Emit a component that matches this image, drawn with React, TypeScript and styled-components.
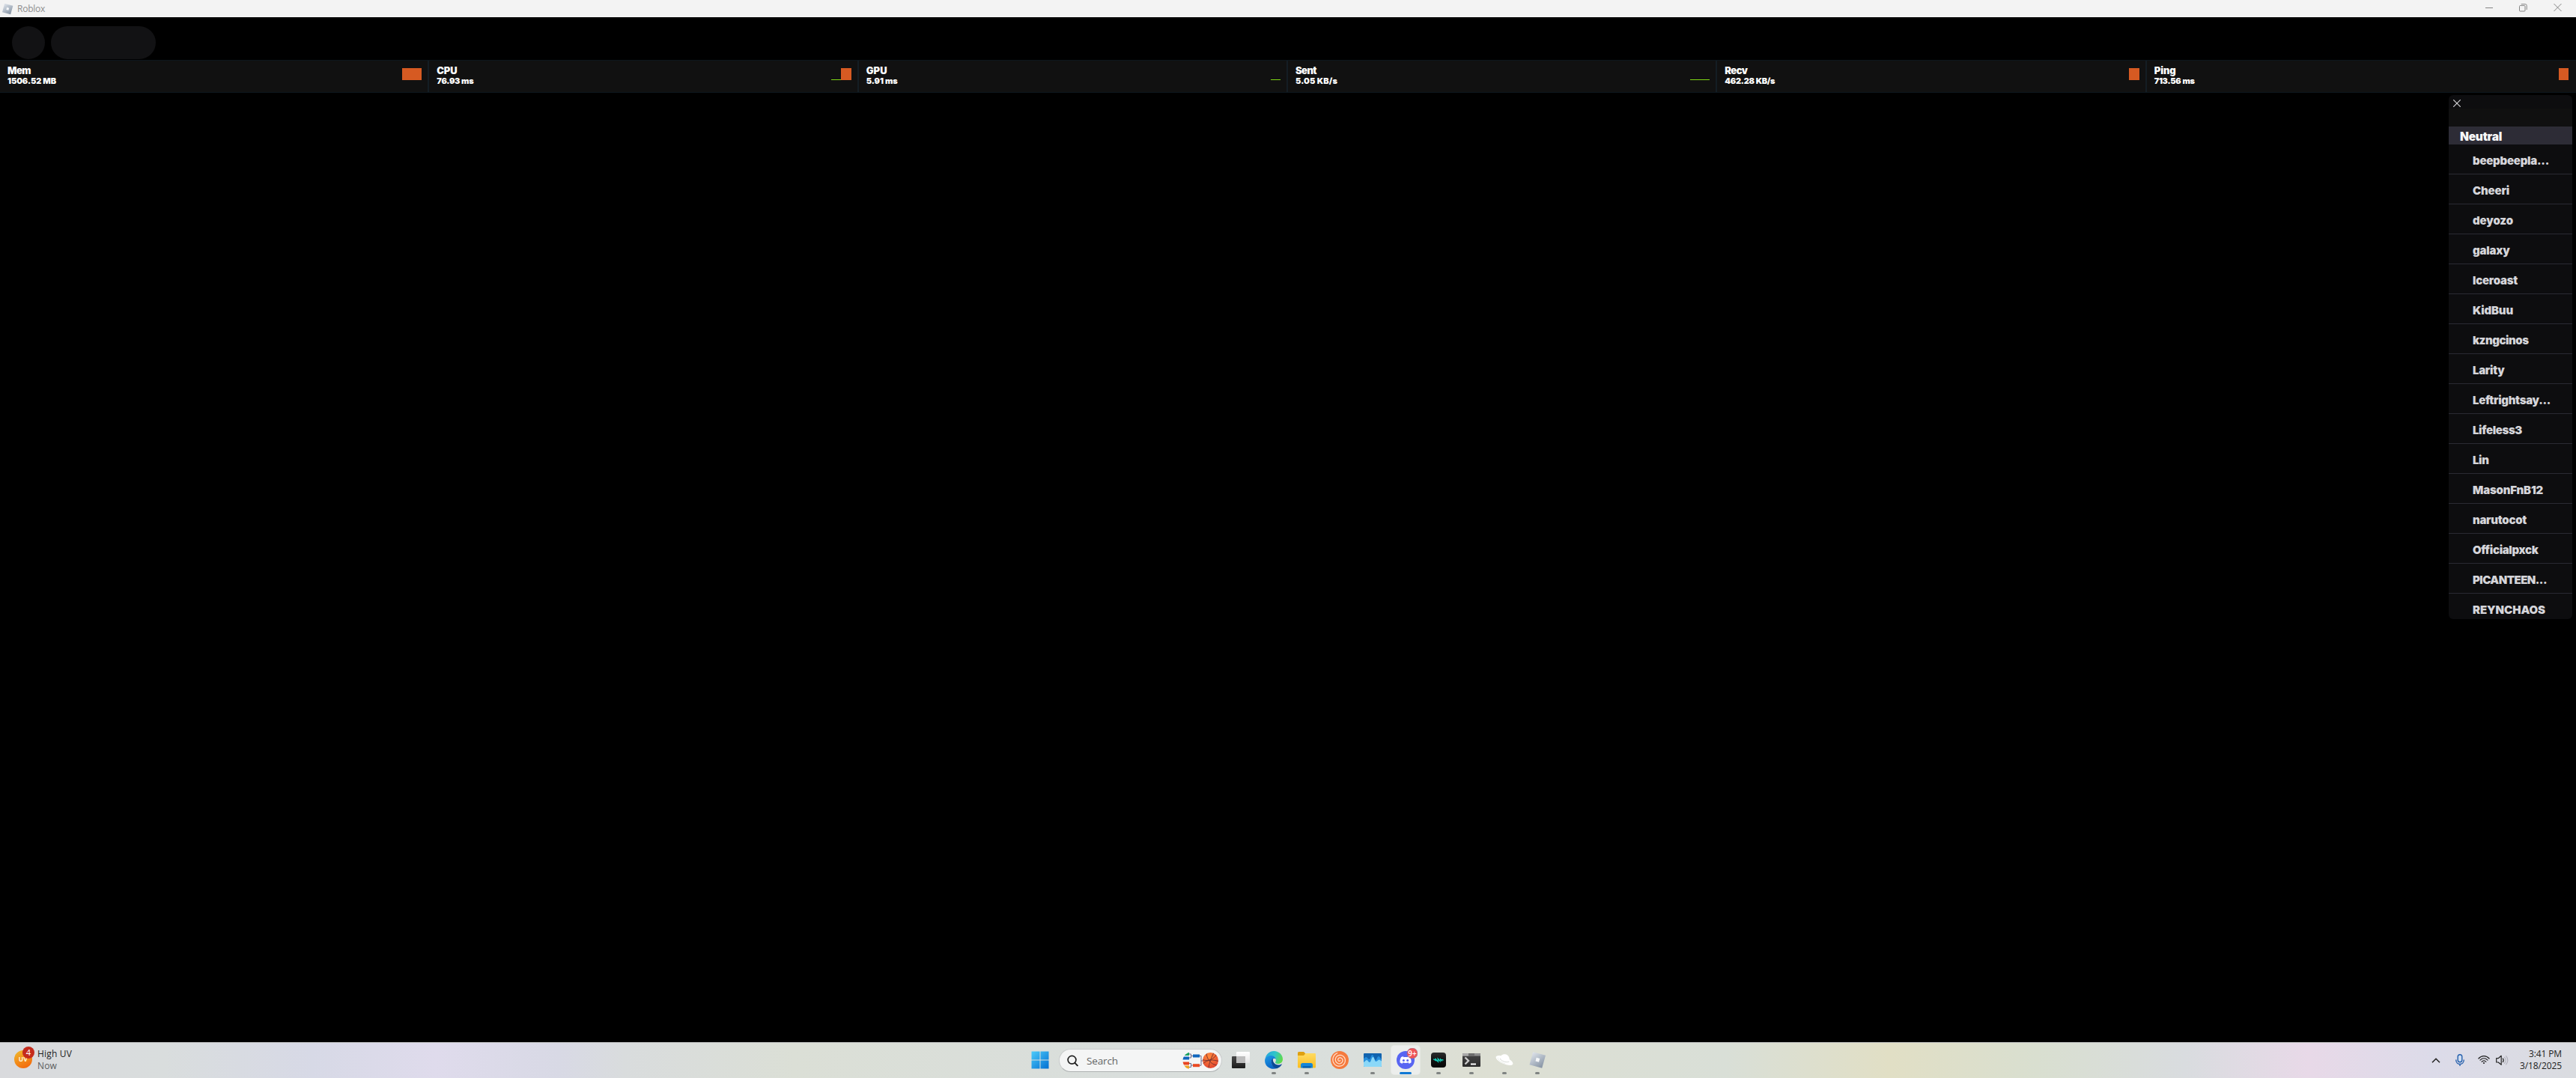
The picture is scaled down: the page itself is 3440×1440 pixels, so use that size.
import React, { useLayoutEffect, useRef, useState } from "react";
import styled, { createGlobalStyle } from "styled-components";

const GlobalStyle = createGlobalStyle`
  * { box-sizing: border-box; }
  html, body { margin: 0; background: #000; overflow: hidden; }
  svg { display: block; flex: none; }
`;

const uiFont = `"Open Sans", "Noto Sans", sans-serif`;
const gameFont = `Inter, "Noto Sans", sans-serif`;

const Screen = styled.div`
  display: flex;
  flex-direction: column;
  width: 3440px;
  height: 1440px;
  background: #000;
  font-family: ${uiFont};
`;

/* Text whose tracking is computed so that it spans a given width */
const Tracked = styled.span`
  display: inline-block;
  white-space: pre;
`;

function FitText({ text, width }: { text: string; width: number }) {
  const ref = useRef<HTMLSpanElement>(null);
  const [spacing, setSpacing] = useState(0);
  useLayoutEffect(() => {
    const el = ref.current;
    if (!el) return;
    const natural = el.getBoundingClientRect().width;
    setSpacing((width - natural + 1) / text.length);
  }, [text, width]);
  return (
    <Tracked ref={ref} style={{ letterSpacing: spacing }}>
      {text}
    </Tracked>
  );
}

/* ---------- window title bar ---------- */
const TitleBar = styled.header`
  display: flex;
  align-items: center;
  height: 23px;
  padding-left: 2px;
  background: #f3f3f3;
  color: #8e8e8e;
`;
const TitleText = styled.div`
  flex: 1;
  padding-left: 5px;
  font-size: 12px;
  line-height: 22px;
`;
const WindowButton = styled.div<{ $w: number }>`
  display: flex;
  align-items: center;
  justify-content: center;
  width: ${(p) => p.$w}px;
  height: 23px;
`;

/* ---------- game view ---------- */
const Game = styled.main`
  display: flex;
  flex-direction: column;
  flex: 1;
  min-height: 0;
`;
const TopChips = styled.div`
  display: flex;
  gap: 8px;
  height: 57px;
  padding: 12px 16px 0;
`;
const Chip = styled.div<{ $w: number }>`
  width: ${(p) => p.$w}px;
  height: 44px;
  border-radius: 22px;
  background: #121214;
`;
const StatsBar = styled.div`
  display: grid;
  grid-template-columns: repeat(6, 1fr);
  height: 44px;
  background: #111111;
  border-top: 1px solid #0d161d;
  border-bottom: 1px solid #0d161d;
`;
const StatCell = styled.section`
  display: flex;
  justify-content: space-between;
  padding: 7px 8px 0 10px;
  border-right: 2px solid #141d24;
  color: #fff;
  font-family: ${gameFont};
  &:last-child {
    border-right: 0;
    padding-right: 10px;
  }
`;
const StatTitle = styled.div`
  height: 14px;
  font-size: 13px;
  font-weight: 900;
  line-height: 13px;
`;
const StatValue = styled.div`
  height: 12px;
  font-size: 11px;
  font-weight: 900;
  line-height: 13px;
`;
const Meter = styled.div`
  display: flex;
  align-items: flex-end;
  height: 16px;
  margin-top: 3px;
`;
const MeterBar = styled.div<{ $w: number; $hot?: boolean }>`
  width: ${(p) => p.$w}px;
  height: ${(p) => (p.$hot ? 16 : 1)}px;
  background: ${(p) => (p.$hot ? "#d65a22" : "#7fd614")};
`;

/* ---------- player list ---------- */
const PlayerArea = styled.div`
  display: flex;
  justify-content: flex-end;
  padding: 3px 5px 0 0;
`;
const PlayerPanel = styled.aside`
  width: 165px;
  height: 700px;
  overflow: hidden;
  border-radius: 6px;
  background: #0d0d0f;
  font-family: ${gameFont};
`;
const PanelHead = styled.div`
  height: 18px;
  padding: 6px 0 0 6px;
`;
const PanelGap = styled.div`
  height: 24px;
  background: #101010;
`;
const TeamRow = styled.div`
  height: 24px;
  padding-left: 15px;
  background: #2d2c36;
  color: #f7f7f8;
  font-size: 15.5px;
  font-weight: 900;
  line-height: 27px;
`;
const PlayerRow = styled.div`
  height: 40px;
  padding-left: 32px;
  border-bottom: 1px solid #2a2a33;
  color: #d5d5da;
  font-size: 15px;
  font-weight: 900;
  line-height: 43px;
`;

/* ---------- taskbar ---------- */
const TaskBar = styled.footer`
  display: grid;
  grid-template-columns: 1fr auto 1fr;
  height: 48px;
  border-top: 1px solid #b5b6b6;
  background: linear-gradient(
    90deg,
    #d9dadd 0, #d9dddd 219px, #d7d9e6 417px, #dfdbec 581px, #d8d9e5 746px,
    #d9dcdd 833px, #dbdfd6 1060px, #d9dedc 1500px, #dadfdc 1800px, #dddfd3 1974px,
    #d9dfd7 2304px, #e1dfc5 2523px, #d9dfd0 2720px, #d9dcdf 2918px, #e8d9e8 3082px,
    #dcdbe9 3247px, #dadce0 3440px
  );
`;
const Weather = styled.div`
  display: flex;
  padding: 5px 0 0 18px;
  gap: 3px;
`;
const TwoLines = styled.div`
  padding-top: 2px;
  color: #1c1c1c;
  font-size: 12px;
  line-height: 16px;
`;
const Muted = styled.div`
  color: #5b5d5e;
`;
const Apps = styled.nav`
  display: flex;
  padding-left: 2px;
`;
const AppSlot = styled.div`
  display: flex;
  flex-direction: column;
  align-items: center;
  width: 44px;
  height: 47px;
  padding-top: 4px;
`;
const AppTile = styled.div<{ $active?: boolean }>`
  display: flex;
  flex-direction: column;
  align-items: center;
  justify-content: flex-end;
  gap: 3px;
  width: 38px;
  height: 38px;
  border-radius: 4px;
  background: ${(p) => (p.$active ? "#eceeec" : "transparent")};
  box-shadow: ${(p) => (p.$active ? "0 0 0 1px rgba(255,255,255,.3)" : "none")};
`;
const Indicator = styled.div<{ $state: "none" | "open" | "active" }>`
  width: ${(p) => (p.$state === "active" ? 16 : 6)}px;
  height: 3px;
  border-radius: 2px;
  background: ${(p) =>
    p.$state === "active" ? "#0f78d4" : p.$state === "open" ? "#7f8382" : "transparent"};
`;
const SearchBox = styled.div`
  display: flex;
  align-items: center;
  width: 218px;
  height: 31px;
  margin: 8px 3px 0;
  padding: 0 3px 0 10px;
  border: 1px solid #c9cccc;
  border-bottom-color: #aeb2b2;
  border-radius: 16px;
  background: #f4f5f5;
`;
const SearchLabel = styled.div`
  flex: 1;
  padding-left: 11px;
  color: #626464;
  font-size: 13.5px;
  line-height: 28px;
`;
const Tray = styled.div`
  display: flex;
  justify-content: flex-end;
  padding-right: 19px;
`;
const TrayIcons = styled.div`
  display: flex;
  padding: 7px 15px 0 0;
`;
const Clock = styled.div`
  padding-top: 7px;
  text-align: right;
  color: #1c1c1c;
  font-size: 12px;
  line-height: 16px;
`;

const RobloxMark = ({ size }: { size: number }) => (
  <svg width={size} height={size} viewBox="0 0 24 24">
    <defs>
      <linearGradient id={"rb" + size} x1="0" y1="0" x2=".7" y2="1">
        <stop offset="0" stopColor="#e9ecf1" />
        <stop offset=".45" stopColor="#bcc5d0" />
        <stop offset="1" stopColor="#8794a4" />
      </linearGradient>
    </defs>
    <path d="M6.2 1.2 23 5.7 18.2 22.8 1.5 18.3Z" fill={`url(#rb${size})`} />
    <path d="m10.7 8.8 4.6 1.2-1.3 4.7-4.5-1.2Z" fill="#f5f7f9" />
  </svg>
);

const UvIcon = () => (
  <svg width="29" height="32" viewBox="0 0 29 32">
    <defs>
      <linearGradient id="uv" x1="0.2" y1="0" x2=".7" y2="1">
        <stop offset="0" stopColor="#efb52b" />
        <stop offset="1" stopColor="#f4680b" />
      </linearGradient>
    </defs>
    <circle cx="13" cy="17" r="12" fill="url(#uv)" />
    <text x="6.8" y="20.3" fontFamily="Open Sans" fontWeight="700" fontSize="8.5" fill="#fff3d8">UV</text>
    <circle cx="20" cy="8" r="8" fill="#c42b1c" />
    <text x="20" y="11.9" textAnchor="middle" fontFamily="Open Sans" fontSize="11" fill="#fff">4</text>
  </svg>
);

const StartIcon = () => (
  <svg width="24" height="24" viewBox="0 0 24 24">
    <defs>
      <linearGradient id="win" gradientUnits="userSpaceOnUse" x1="0" y1="0" x2="22" y2="24">
        <stop offset="0" stopColor="#4fcdfb" />
        <stop offset="1" stopColor="#0371d2" />
      </linearGradient>
    </defs>
    <path d="M.5.5h11v11H.5ZM12.500.5h11v11h-11ZM.5 12.500h11v11H.5ZM12.500 12.500h11v11h-11Z" fill="url(#win)" />
  </svg>
);

const SearchIcon = () => (
  <svg width="15" height="16" viewBox="0 0 15 16" fill="none" stroke="#222" strokeLinecap="round">
    <circle cx="6.500" cy="6.800" r="5.400" strokeWidth="1.700" />
    <path d="m10.400 10.900 3.400 3.500" strokeWidth="2" />
  </svg>
);

const BracketBall = () => (
  <svg width="49" height="24" viewBox="0 0 49 24">
    <defs>
      <clipPath id="half"><circle cx="12" cy="12" r="11.500" /></clipPath>
      <radialGradient id="ball" cx=".4" cy=".25" r=".8">
        <stop offset="0" stopColor="#ff8a3d" />
        <stop offset="1" stopColor="#e2432f" />
      </radialGradient>
      <clipPath id="ballClip"><circle cx="37.500" cy="11.500" r="10.500" /></clipPath>
    </defs>
    <g clipPath="url(#half)">
      <path d="M0 1h9v4H0z" fill="#1da362" />
      <path d="M0 6.500h9v4H0z" fill="#1166bd" />
      <path d="M0 13.500h9v4H0z" fill="#e9441f" />
      <path d="M0 18.500h9v4H0z" fill="#eda421" />
    </g>
    <path d="M9 3h2.500v5H9M9 15.500h2.500v5H9M11.500 5.500H14M11.500 18H14M23 5.500h2v12.700h-2M25 12h3" fill="none" stroke="#6b6787" />
    <path d="M14 3.500h9v4h-9z" fill="#1166bd" />
    <path d="M14 16.200h9v4h-9z" fill="#ea4a22" />
    <circle cx="37.500" cy="11.500" r="10.500" fill="url(#ball)" />
    <g clipPath="url(#ballClip)">
      <path d="M26.500 10.500c8 3 16-1 19-7M32 1c0 8 6 16 14 17M42 1c-3 6-7 15-7 22M27 16c7-6 14-6 22-3" fill="none" stroke="#713030" strokeWidth=".9" />
    </g>
  </svg>
);

const TaskViewIcon = () => (
  <svg width="24" height="24" viewBox="0 0 24 24">
    <defs>
      <linearGradient id="tvd" x1="0" y1="0" x2="0" y2="1"><stop offset="0" stopColor="#484848" /><stop offset="1" stopColor="#1c1c1c" /></linearGradient>
      <linearGradient id="tvl" x1="0" y1="0" x2="0" y2="1"><stop offset="0" stopColor="#fff" /><stop offset="1" stopColor="#e6e6e6" /></linearGradient>
    </defs>
    <rect x="0" y="7" width="18" height="16" rx="1" fill="url(#tvd)" />
    <rect x="6" y="1" width="18" height="15" rx="1" fill="url(#tvl)" />
    <path d="M6 7h12v9H6z" fill="#bdbdbd" />
  </svg>
);

const EdgeIcon = () => (
  <svg width="24" height="24" viewBox="0 0 24 24">
    <defs>
      <linearGradient id="e1" x1="0" y1=".3" x2="1" y2=".6"><stop offset="0" stopColor="#27a6dc" /><stop offset=".5" stopColor="#2fc5c9" /><stop offset="1" stopColor="#62dc45" /></linearGradient>
      <linearGradient id="e2" x1="0" y1="0" x2=".5" y2="1"><stop offset="0" stopColor="#1f9be6" /><stop offset="1" stopColor="#0a63c4" /></linearGradient>
    </defs>
    <path d="M.5 10.500C1.500 4.500 6.200 0 12.200 0 19 0 24 5 24 11c0 3.800-2.800 6-6 6-2.800 0-4.300-1-4.100-1.800.2-.7 1-1.300 1-3C14.900 9.300 11.500 6.500 8 6.500c-3.500 0-6.300 1.600-7.500 4Z" fill="url(#e1)" />
    <path d="M.1 12.500C.2 8.500 3.800 6 8 6c3.800 0 6.400 2.300 6.900 5-1-1.600-5.400-1.300-6 2-.7 4.600 3 9.300 8.200 9.800C8.300 26.200-.2 20.500.1 12.500Z" fill="url(#e2)" />
    <path d="M8.700 14c-.1-2 .9-3.700 2.500-4.300-1.500 3.700 2 9 7.200 8.800 1.800-.1 3-.6 3.900-1.100.4-.2.7.1.4.6-1.500 2.500-3.600 4.300-6.200 5.200C11 23 8.900 18 8.700 14Z" fill="#0c4b97" />
  </svg>
);

const FolderIcon = () => (
  <svg width="24" height="24" viewBox="0 0 24 24">
    <defs><linearGradient id="fo" x1="0" y1="0" x2="0" y2="1"><stop offset="0" stopColor="#ffdb62" /><stop offset="1" stopColor="#fabd22" /></linearGradient></defs>
    <path d="M0 2.500A1.500 1.500 0 0 1 1.500 1H8l2.500 2.500V10H0Z" fill="#dfa00f" />
    <path d="M0 6h8l2.500-3H23a1 1 0 0 1 1 1v17.500a1 1 0 0 1-1 1H1a1 1 0 0 1-1-1Z" fill="url(#fo)" />
    <path d="M4 22.500v-4a2.500 2.500 0 0 1 2.500-2.500h11a2.500 2.500 0 0 1 2.500 2.500v4Z" fill="#1687d9" />
    <path d="M6.500 20h11v2.500h-11z" fill="#0b62b3" />
  </svg>
);

/* Archimedean spiral, 2.6 turns from the middle of the disc */
const spiral = Array.from({ length: 80 }, (_, i) => {
  const t = i / 79;
  const angle = t * 2.6 * Math.PI * 2 + 0.6;
  const r = 0.8 + t * 9;
  return `${i ? "L" : "M"}${(12 + r * Math.cos(angle)).toFixed(2)} ${(12 + r * Math.sin(angle)).toFixed(2)}`;
}).join("");

const SwirlIcon = () => (
  <svg width="24" height="24" viewBox="0 0 24 24" fill="none">
    <circle cx="12" cy="12" r="12" fill="#f57a3d" />
    <path d={spiral} stroke="#ffdcc8" strokeWidth="1.300" strokeLinecap="round" />
  </svg>
);

const WaveAppIcon = () => (
  <svg width="24" height="24" viewBox="0 0 24 24">
    <rect y="3" width="24" height="18" rx="1" fill="#1163ae" />
    <path d="M0 10c1.500-.500 2-2 3.500-2C5 8 5.500 11 7.500 11c2 0 2.300-6 4-6 2 0 2.500 7 4.500 7 1.500 0 2-5 4-5 1.500 0 2.500 3 4 4v9H0Z" fill="#268edb" />
    <path d="M0 15c2-.5 2.500-3 4-3 2 0 2 3 4 3s2.500-7 4.500-7 2 6 4 6 2.500-2.500 4-2.500c1.500 0 2 1.500 3.500 2V20a1 1 0 0 1-1 1H1a1 1 0 0 1-1-1Z" fill="#8bd8f8" />
  </svg>
);

const DiscordIcon = () => (
  <svg width="28" height="28" viewBox="0 0 28 28">
    <circle cx="12" cy="16" r="12" fill="#5865f2" />
    <path d="M8.900 11.200c-1 .1-2 .5-2.700.9C4.900 14 4.300 16.600 4.500 19.300c1 .8 2.100 1.300 3.100 1.500l.9-1.500c2.300.8 4.900.8 7.100 0l.9 1.500c1.100-.2 2.100-.8 3.100-1.500.2-2.900-.5-5.300-1.800-7.200-.8-.5-1.700-.8-2.700-.9l-.6 1c-1.700-.2-3.300-.2-5 0Z" fill="#fff" />
    <circle cx="9.400" cy="16.600" r="1.500" fill="#5865f2" />
    <circle cx="14.700" cy="16.600" r="1.500" fill="#5865f2" />
    <circle cx="21" cy="7" r="7" fill="#f05357" stroke="#8b7790" strokeWidth=".6" />
    <text x="21" y="10.500" textAnchor="middle" fontFamily="Open Sans" fontWeight="600" fontSize="10" fill="#fff">9+</text>
  </svg>
);

const ScribbleIcon = () => (
  <svg width="24" height="24" viewBox="0 0 24 24">
    <defs><linearGradient id="sc" x1="0" y1="0" x2="0" y2="1"><stop offset="0" stopColor="#2b2d2e" /><stop offset=".5" stopColor="#111" /><stop offset="1" stopColor="#050505" /></linearGradient></defs>
    <rect x="2" y="2" width="20" height="20" rx="4" fill="url(#sc)" />
    <path d="m5 10.800 3.500 2-1-3 4 4.500-.3-4.300 3 3.700.2-3 2 2.300.3-1.500 2 .8" fill="none" stroke="#15d6c2" strokeWidth="1.200" />
  </svg>
);

const TerminalIcon = () => (
  <svg width="24" height="24" viewBox="0 0 24 24">
    <defs><linearGradient id="te" x1="0" y1="0" x2="0" y2="1"><stop offset="0" stopColor="#474747" /><stop offset="1" stopColor="#2b2b2b" /></linearGradient></defs>
    <rect y="3" width="24" height="18" rx="1" fill="url(#te)" />
    <path d="M0 4a1 1 0 0 1 1-1h22a1 1 0 0 1 1 1v2.500H0Z" fill="#8f8f8f" />
    <path d="M0 4a1 1 0 0 1 1-1h7v3.500H0Z" fill="#a9a9a9" />
    <path d="M8 3h8v3.500H8z" fill="#6d6d6d" />
    <path d="m3.500 8.500 4.500 4.500-4.500 4.500" fill="none" stroke="#ccc" strokeWidth="2.400" />
    <path d="M11 16.500h7v2h-7z" fill="#fff" />
  </svg>
);

const PlanetIcon = () => (
  <svg width="24" height="24" viewBox="0 0 24 24">
    <path d="M6.300 9.500C6.500 6 9.500 3.800 13 4.300c3.500.6 6 3.500 5.800 7.700 0 2-1 3.500-2 4.300-4-.5-8-2.500-10.500-6.800Z" fill="#fff" />
    <ellipse cx="12" cy="12.500" rx="12.300" ry="4.700" transform="rotate(24 12 12.500)" fill="#fff" />
    <path d="M6.300 9.800c.5 3.300 8 6.200 12 4.300" fill="none" stroke="#d4d8d3" strokeWidth=".9" />
    <path d="M3.500 8.500c-2 1.500 3.500 6.500 9.500 8.500" fill="none" stroke="#e3e6e1" strokeWidth=".7" />
  </svg>
);

const ChevronIcon = () => (
  <svg width="12" height="33" viewBox="0 0 12 33" fill="none" stroke="#222" strokeWidth="1.500">
    <path d="m1 19.300 5-5 5 5" />
  </svg>
);
const MicIcon = () => (
  <svg width="50" height="33" viewBox="0 0 50 33" fill="none" stroke="#2560ad" strokeWidth="1.400">
    <rect x="23.200" y="8.700" width="5.600" height="10" rx="2.800" fill="#cfdcf0" />
    <path d="M20.700 15.500c0 8 10.600 8 10.600 0M26 21.500V24" />
  </svg>
);
const WifiIcon = () => (
  <svg width="16" height="33" viewBox="0 0 16 33" fill="none" stroke="#222" strokeWidth="1.200" strokeLinecap="round">
    <path d="M.9 14c4-4.500 10.200-4.500 14.200 0M3 16.200c3-3 7-3 10 0M5.200 18.300c1.800-1.700 3.900-1.700 5.600 0" />
    <circle cx="8" cy="20" r="1.100" fill="#222" stroke="none" />
  </svg>
);
const SpeakerIcon = () => (
  <svg width="25" height="33" viewBox="0 0 25 33" fill="none" stroke="#222" strokeWidth="1.200" strokeLinejoin="round" strokeLinecap="round">
    <path d="M8.700 13.700h2.500l4-3.400v12l-4-3.300H8.700ZM17.300 14c1 1.300 1 3.300 0 4.600" />
    <path d="M19.500 12.300c2 2.300 2 5.700 0 8M21.600 10.700c3 3.200 3 8 0 11.200" stroke="#b3b3bd" />
  </svg>
);

type Stat = { title: string; tw: number; value: string; vw: number; bars: { w: number; hot?: boolean }[] };
const stats: Stat[] = [
  { title: "Mem", tw: 30, value: "1506.52 MB", vw: 64, bars: [{ w: 26, hot: true }] },
  { title: "CPU", tw: 26, value: "76.93 ms", vw: 48, bars: [{ w: 13 }, { w: 14, hot: true }] },
  { title: "GPU", tw: 27, value: "5.91 ms", vw: 41, bars: [{ w: 13 }] },
  { title: "Sent", tw: 27, value: "5.05 KB/s", vw: 55, bars: [{ w: 26 }] },
  { title: "Recv", tw: 29, value: "462.28 KB/s", vw: 66, bars: [{ w: 14, hot: true }] },
  { title: "Ping", tw: 28, value: "713.56 ms", vw: 53, bars: [{ w: 13, hot: true }] },
];

const players: [string, number][] = [
  ["beepbeepla...", 101], ["Cheeri", 48], ["deyozo", 53], ["galaxy", 48.500], ["Iceroast", 59],
  ["KidBuu", 53], ["kzngcinos", 73.500], ["Larity", 41.500], ["Leftrightsay...", 103],
  ["Lifeless3", 65], ["Lin", 20.500], ["MasonFnB12", 93], ["narutocot", 71],
  ["Officialpxck", 86.500], ["PICANTEEN...", 98], ["REYNCHAOS", 96],
];

type App = { icon: React.ReactNode; state: "none" | "open" | "active" };
const apps: App[] = [
  { icon: <TaskViewIcon />, state: "none" },
  { icon: <EdgeIcon />, state: "open" },
  { icon: <FolderIcon />, state: "open" },
  { icon: <SwirlIcon />, state: "none" },
  { icon: <WaveAppIcon />, state: "open" },
  { icon: <DiscordIcon />, state: "active" },
  { icon: <ScribbleIcon />, state: "open" },
  { icon: <TerminalIcon />, state: "open" },
  { icon: <PlanetIcon />, state: "open" },
  { icon: <RobloxMark size={24} />, state: "open" },
];

const IconHolder = styled.div<{ $badge?: boolean }>`
  display: flex;
  padding-left: ${(p) => (p.$badge ? 4 : 0)}px;
  padding-bottom: 1px;
`;

const AppButton = ({ icon, state }: App) => (
  <AppSlot>
    <AppTile $active={state === "active"}>
      <IconHolder $badge={state === "active"}>{icon}</IconHolder>
      <Indicator $state={state} />
    </AppTile>
  </AppSlot>
);

export default function App() {
  return (
    <Screen>
      <GlobalStyle />
      <TitleBar>
        <RobloxMark size={16} />
        <TitleText><FitText text="Roblox" width={36} /></TitleText>
        <WindowButton $w={46}>
          <svg width="10" height="23" viewBox="0 0 10 23" stroke="#858585"><path d="M0 10.500h10" /></svg>
        </WindowButton>
        <WindowButton $w={44}>
          <svg width="11" height="23" viewBox="0 0 11 23" fill="none" stroke="#858585">
            <rect x=".5" y="7.500" width="7.500" height="7.500" rx="1" />
            <path d="M2.700 5.500h5.500a2 2 0 0 1 2 2v5.500" />
          </svg>
        </WindowButton>
        <WindowButton $w={49}>
          <svg width="11" height="23" viewBox="0 0 11 23" stroke="#858585"><path d="m.5 5 10 10M10.500 5l-10 10" /></svg>
        </WindowButton>
      </TitleBar>

      <Game>
        <TopChips>
          <Chip $w={44} />
          <Chip $w={140} />
        </TopChips>
        <StatsBar>
          {stats.map((s) => (
            <StatCell key={s.title}>
              <div>
                <StatTitle><FitText text={s.title} width={s.tw} /></StatTitle>
                <StatValue><FitText text={s.value} width={s.vw} /></StatValue>
              </div>
              <Meter>
                {s.bars.map((b, i) => <MeterBar key={i} $w={b.w} $hot={b.hot} />)}
              </Meter>
            </StatCell>
          ))}
        </StatsBar>
        <PlayerArea>
          <PlayerPanel>
            <PanelHead>
              <svg width="10" height="10" viewBox="0 0 10 10" stroke="#cfcfd2" strokeWidth="1.200" strokeLinecap="round">
                <path d="m.6.6 8.800 8.800M9.400.6.6 9.400" />
              </svg>
            </PanelHead>
            <PanelGap />
            <TeamRow><FitText text="Neutral" width={55} /></TeamRow>
            {players.map(([name, w]) => (
              <PlayerRow key={name}><FitText text={name} width={w} /></PlayerRow>
            ))}
          </PlayerPanel>
        </PlayerArea>
      </Game>

      <TaskBar>
        <Weather>
          <UvIcon />
          <TwoLines>
            <div><FitText text="High UV" width={45} /></div>
            <Muted><FitText text="Now" width={25} /></Muted>
          </TwoLines>
        </Weather>
        <Apps>
          <AppSlot>
            <AppTile>
              <IconHolder><StartIcon /></IconHolder>
              <Indicator $state="none" />
            </AppTile>
          </AppSlot>
          <SearchBox>
            <SearchIcon />
            <SearchLabel><FitText text="Search" width={41} /></SearchLabel>
            <BracketBall />
          </SearchBox>
          {apps.map((a, i) => <AppButton key={i} {...a} />)}
        </Apps>
        <Tray>
          <TrayIcons>
            <ChevronIcon />
            <MicIcon />
            <WifiIcon />
            <SpeakerIcon />
          </TrayIcons>
          <Clock>
            <div><FitText text="3:41 PM" width={43} /></div>
            <div><FitText text="3/18/2025" width={55} /></div>
          </Clock>
        </Tray>
      </TaskBar>
    </Screen>
  );
}
